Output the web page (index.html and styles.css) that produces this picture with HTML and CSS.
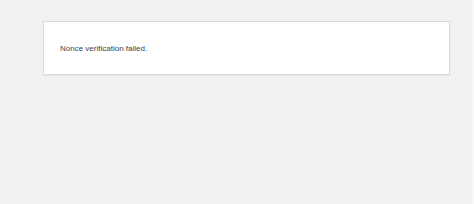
FILE: index.html
```html
<!DOCTYPE html>
<html lang="en">
<head>
<meta charset="utf-8">
<title>Error</title>
<link rel="stylesheet" href="styles.css">
</head>
<body>
<div class="page">
  <div class="error-page">
    <p class="message">Nonce verification failed.</p>
  </div>
</div>
</body>
</html>
```
FILE: styles.css
```css
html, body {
  margin: 0;
  padding: 0;
  height: 100%;
}
body {
  background: #f1f1f1;
  font-family: "Liberation Sans", Arial, sans-serif;
  color: #3c434a;
}
.page {
  height: 100%;
  box-sizing: border-box;
  padding: 21px 0 0 43px;
  border-right: 2px solid #f7f7f7;
}
.error-page {
  width: 405px;
  height: 52px;
  background: #fff;
  border: 1px solid #d6d8da;
  box-shadow: 0 1px 1px rgba(0,0,0,0.04);
  padding: 0 16px;
  box-sizing: border-box;
  width: 407px;
  height: 54px;
  display: flex;
  align-items: center;
}
.message {
  margin: 0;
  font-size: 8px;
  line-height: 12px;
  padding-top: 1px;
}
```
